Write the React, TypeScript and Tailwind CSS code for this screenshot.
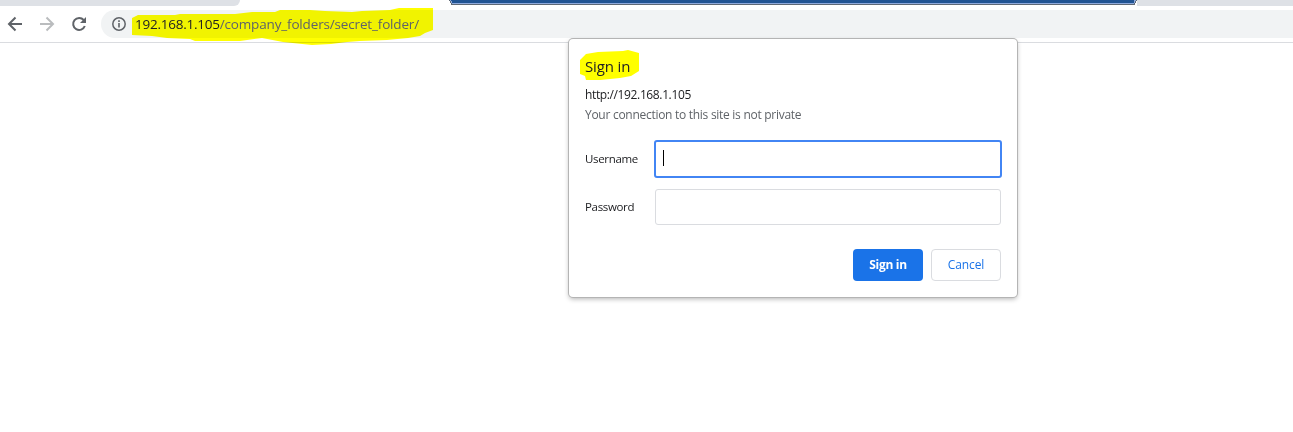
import type { ReactNode } from "react";

function Label({ children, className }: { children: ReactNode; className: string }) {
  return (
    <span className={"block whitespace-nowrap font-['Open_Sans','Noto_Sans',sans-serif] leading-[18px] " + className}>
      {children}
    </span>
  );
}

function Toolbar() {
  return (
    <div className="flex h-[37px] items-start border-b border-[#dadce0] bg-white">
      <svg width="101" height="36" viewBox="0 6 101 36" fill="none" strokeWidth="2" className="shrink-0">
        <path d="M22 24H9.5M15.5 17.5L9 24l6.5 6.5" stroke="#5f6368" />
        <path d="M40 24h12.5M46.500 17.500L53 24l-6.500 6.500" stroke="#babcbe" />
        <path d="M83.700 20A6 6 0 1 0 84.800 26" stroke="#5f6368" />
        <path d="M86 17v6h-6z" fill="#5f6368" />
      </svg>
      <div className="relative mt-1 flex h-7 flex-1 items-start rounded-l-full bg-[#f1f3f4]">
        <svg width="34" height="28" fill="none" stroke="#5f6368" strokeWidth="1.500" className="shrink-0">
          <circle cx="18" cy="14" r="6.200" />
          <path d="M18 13v4.500M18 10.300v1.600" strokeWidth="1.600" />
        </svg>
        <svg width="310" height="42" className="pointer-events-none absolute left-[29px] -top-[4px] mix-blend-multiply" viewBox="130 6 310 42">
          <path fill="#ffff00" d="M132 18L138 15L175 15L180 14L215 14L235 14L252 12L275 12L280 10L310 10L325 11L352 12L362 11L390 10L399 8L433 8V30L425 33L420 36L408 38L387 40L360 41L347 42L331 44L312 45L283 42L262 38L240 41L195 41L190 39L167 38L152 36L132 35Z" />
        </svg>
        <Label className="relative mt-[5px] text-[13.500px] tracking-[-0.160px] text-[#202124]"><span className="tracking-[-0.240px]">192.168.1.105</span><span className="text-[#5f6368]">/company_folders/secret_folder/</span></Label>
      </div>
    </div>
  );
}

function SignInDialog() {
  return (
    <div className="absolute left-[569px] top-[39px] flex h-[258px] w-[448px] flex-col rounded bg-white px-4 shadow-[0_0_0_1px_#b4b4b4,0_2px_5px_rgba(0,0,0,0.3)]">
      <svg width="62" height="34" viewBox="579 48 62 34" className="absolute left-[10px] top-[9px]">
        <path fill="#ffff00" d="M580 60L586 54L598 52L623 51L628 50L639 53V71L631 76L620 78L600 80L586 80L585 76L580 74Z" />
      </svg>
      <div className="relative mt-[18px] h-[29px]"><Label className="text-[15px] tracking-[-0.150px] text-[#202124]">Sign in</Label></div>
      <div className="h-5"><Label className="text-[12px] tracking-[-0.370px] text-[#202124]">http://192.168.1.105</Label></div>
      <div className="h-[34px]"><Label className="text-[12px] tracking-[-0.280px] text-[#5f6368]">Your connection to this site is not private</Label></div>
      <div className="flex h-[38px] items-center">
        <div className="w-[69px] shrink-0"><Label className="text-[11.500px] tracking-[-0.330px] text-[#202124]">Username</Label></div>
        <div className="flex h-[38px] w-[348px] shrink-0 items-center rounded-[3px] border-2 border-[#4285f4] bg-white pl-[7px]"><i className="mb-0.5 h-4 w-px bg-black" /></div>
      </div>
      <div className="mt-[11px] flex h-9 items-center">
        <div className="w-[70px] shrink-0"><Label className="text-[11.500px] tracking-[-0.330px] text-[#202124]">Password</Label></div>
        <div className="h-9 w-[346px] shrink-0 rounded-[3px] border border-[#dadce0]" />
      </div>
      <div className="mt-6 flex justify-end gap-2">
        <button className="flex h-8 w-[70px] items-center justify-center rounded bg-[#1a73e8]"><Label className="text-[12px] font-bold tracking-[-0.280px] text-white">Sign in</Label></button>
        <button className="flex h-8 w-[70px] items-center justify-center rounded border border-[#dadce0]"><Label className="text-[12px] font-medium tracking-[-0.120px] text-[#1a73e8]">Cancel</Label></button>
      </div>
    </div>
  );
}

export default function App() {
  return (
    <main className="relative h-[432px] w-full overflow-hidden bg-white">
      <div className="flex h-1.5 bg-white">
        <div className="h-full w-60 rounded-br-[6px] bg-[#dee1e6]" />
        <div className="w-[209px]" />
        <svg width="688" height="6" className="shrink-0" shapeRendering="crispEdges">
          <path d="M0 0h688v1h-1v2h-1v2H2V3H1V1H0z" fill="#5f6975" />
          <path d="M1 0h686v1h-1v2h-1v1H3V3H2V1H1z" fill="#8faadc" />
          <path d="M2 0h683v3H3V1H2z" fill="#215493" />
        </svg>
        <div className="flex-1 bg-[#dee1e6]" />
      </div>
      <Toolbar />
      <SignInDialog />
    </main>
  );
}
